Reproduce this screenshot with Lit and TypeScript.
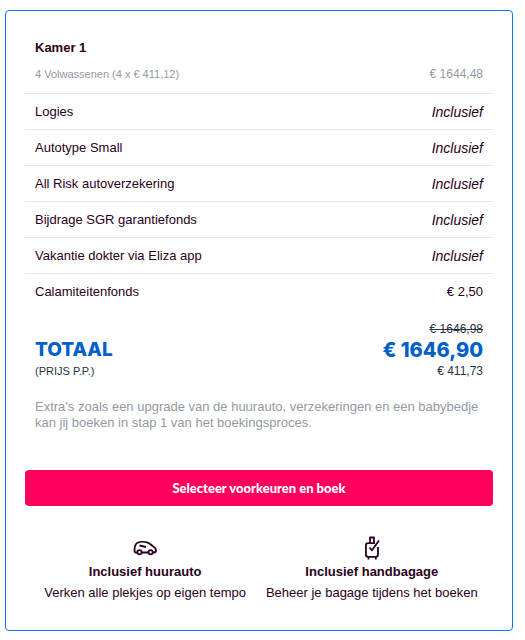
import { LitElement, html, css } from "lit";
import { customElement } from "lit/decorators.js";

interface Line {
  label: string;
  value: string;
  included: boolean;
}

const LINES: Line[] = [
  { label: "Logies", value: "Inclusief", included: true },
  { label: "Autotype Small", value: "Inclusief", included: true },
  { label: "All Risk autoverzekering", value: "Inclusief", included: true },
  { label: "Bijdrage SGR garantiefonds", value: "Inclusief", included: true },
  { label: "Vakantie dokter via Eliza app", value: "Inclusief", included: true },
  { label: "Calamiteitenfonds", value: "€ 2,50", included: false },
];

const carIcon = html`<svg class="icon" viewBox="0 0 24 24" aria-hidden="true">
  <path d="M4.300 16.500H3C1.800 16.500 1.500 15.800 1.500 14.500C1.500 11 2.200 8 4.500 6.800C7 5.500 12 5.600 14.800 6.600C17 7.500 18.300 9.300 20 10.300C22 11.300 23 12.300 23 14.500C23 16 22.300 16.500 21 16.500H20M8.800 16.500H15.200" />
  <path d="M6.500 9.500L13 11" />
  <circle cx="6.500" cy="16.200" r="2.100" />
  <circle cx="17.600" cy="16.200" r="2.100" />
</svg>`;

const bagIcon = html`<svg class="icon" viewBox="0 0 24 24" aria-hidden="true">
  <path d="M10 7V1.500H14V7" />
  <path d="M15 7.200H8Q5.900 7.200 5.900 9.300V18.500Q5.900 20.800 8.200 20.800H15.800Q18 20.800 18 18.500V11" />
  <path d="M9.500 11.500L12 14.300L19 4.500" />
  <path d="M8.500 21V23.500M15.800 21V23.500" />
</svg>`;

@customElement("app-root")
export class AppRoot extends LitElement {
  static styles = css`
    :host {
      display: block;
      padding: 10px 12px 8px 5px;
      background: #fff;
      color: #2b0020;
      font: 13px/16px "Liberation Sans", Arial, sans-serif;
    }
    .card {
      border: 1px solid #0a78f0;
      border-radius: 4px;
      padding: 27px 19px;
    }
    .room {
      margin: 0;
      padding: 0 10px;
      font-size: 13px;
      line-height: 20px;
    }
    .lines {
      width: 100%;
      border-collapse: collapse;
    }
    .lines th,
    .lines td {
      height: 35px;
      padding: 0 10px;
      border-top: 1px solid #e5e7e9;
      font-weight: 400;
      text-align: left;
    }
    .lines td {
      text-align: right;
    }
    .lines .persons th,
    .lines .persons td {
      height: 31px;
      padding-bottom: 4px;
      border-top: 0;
      font-size: 12px;
      color: #9499a2;
    }
    .lines .persons th {
      font-size: 11px;
    }
    .lines .included {
      font-size: 14px;
      font-style: italic;
    }
    .total {
      display: flex;
      justify-content: space-between;
      align-items: flex-end;
      padding: 12px 10px 0;
      font-size: 12px;
      color: #28333f;
    }
    .amounts {
      text-align: right;
    }
    .old,
    .sum,
    .per {
      display: block;
    }
    .sum {
      font: 800 20px/26px Inter, "Liberation Sans", sans-serif;
      color: #0060c9;
    }
    .total-label .sum {
      font-size: 19px;
    }
    .total-label .per {
      font-size: 11px;
    }
    .note {
      margin: 20px 0 0;
      padding: 0 10px;
      color: #9499a2;
    }
    .book {
      display: block;
      width: 100%;
      height: 36px;
      margin: 39px 0 0;
      padding: 0;
      border: 0;
      border-radius: 4px;
      background: #ff005c;
      color: #fff;
      font: 900 13px/16px Lato, sans-serif;
    }
    .perks {
      display: grid;
      grid-template-columns: auto auto;
      justify-content: center;
      column-gap: 20px;
      margin: 30px 0 0;
      padding: 0 0 0 4px;
      list-style: none;
      text-align: center;
    }
    .icon {
      display: block;
      width: 24px;
      height: 24px;
      margin: 0 auto 1px;
      fill: none;
      stroke: #2b0020;
      stroke-width: 1.8;
      stroke-linejoin: round;
    }
    .perk-title,
    .perk-text {
      display: block;
      line-height: 21px;
    }
  `;

  private perk(icon: unknown, title: string, text: string) {
    return html`<li>
      ${icon}
      <strong class="perk-title">${title}</strong>
      <span class="perk-text">${text}</span>
    </li>`;
  }

  render() {
    return html`
      <section class="card">
        <h2 class="room">Kamer 1</h2>
        <table class="lines">
          <tbody>
            <tr class="persons">
              <th scope="row">4 Volwassenen (4 x € 411,12)</th>
              <td>€ 1644,48</td>
            </tr>
            ${LINES.map(
              (line) => html`<tr>
                <th scope="row">${line.label}</th>
                <td class=${line.included ? "included" : ""}>${line.value}</td>
              </tr>`
            )}
          </tbody>
        </table>
        <div class="total">
          <div class="total-label">
            <strong class="sum">TOTAAL</strong>
            <span class="per">(PRIJS P.P.)</span>
          </div>
          <div class="amounts">
            <s class="old">€ 1646,98</s>
            <strong class="sum">€ 1646,90</strong>
            <span class="per">€ 411,73</span>
          </div>
        </div>
        <p class="note">
          Extra's zoals een upgrade van de huurauto, verzekeringen en een babybedje kan jij boeken
          in stap 1 van het boekingsproces.
        </p>
        <button class="book" type="button">Selecteer voorkeuren en boek</button>
        <ul class="perks">
          ${this.perk(carIcon, "Inclusief huurauto", "Verken alle plekjes op eigen tempo")}
          ${this.perk(bagIcon, "Inclusief handbagage", "Beheer je bagage tijdens het boeken")}
        </ul>
      </section>
    `;
  }
}
